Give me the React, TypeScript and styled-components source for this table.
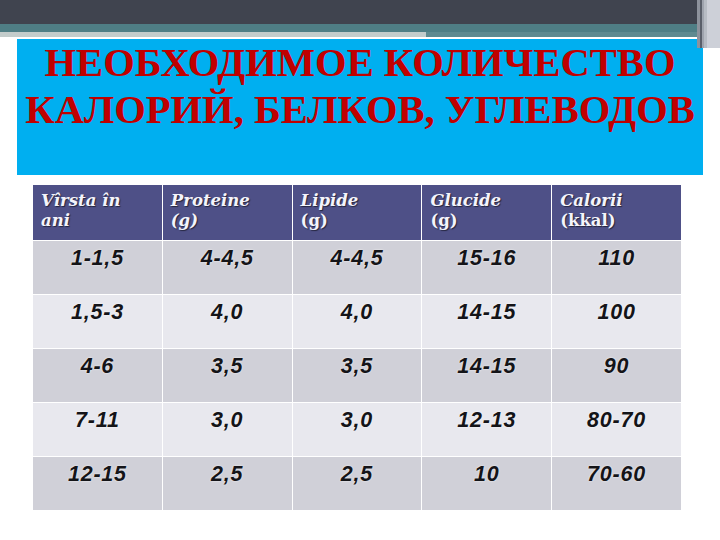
import React from "react";
import styled, { createGlobalStyle } from "styled-components";

const Global = createGlobalStyle`
  html, body { margin: 0; padding: 0; background: #ffffff; }
  body { width: 720px; height: 540px; overflow: hidden; }
`;

const Page = styled.div`
  width: 720px;
  height: 540px;
  background: #ffffff;
  display: flex;
  flex-direction: column;
`;

const TopBar = styled.div`
  display: flex;
  height: 37px;
`;

const BarMain = styled.div`
  flex: 1;
  display: flex;
  flex-direction: column;
`;

const Dark = styled.div`
  height: 24px;
  background: #40444f;
`;

const Teal = styled.div`
  height: 8px;
  background: #4f7e85;
`;

const StripRow = styled.div`
  height: 5px;
  display: flex;
`;

const StripLight = styled.div`
  width: 426px;
  background: #c3cccb;
`;

const StripTeal = styled.div`
  flex: 1;
  background: #5f8a90;
`;

const EdgeLines = styled.div`
  width: 23px;
  display: flex;
  height: 48px;
  position: relative;
  z-index: 1;
`;

const EdgeLine = styled.div<{ $w: number; $c: string }>`
  width: ${(p) => p.$w}px;
  background: ${(p) => p.$c};
`;

const TitleBox = styled.div`
  margin: 2px 0 0 17px;
  width: 686px;
  height: 136px;
  background: #00aff0;
  box-sizing: border-box;
  text-align: center;
  font-family: "Liberation Serif", "Times New Roman", serif;
  font-weight: bold;
  font-size: 40.6px;
  line-height: 47px;
  color: #c00000;
`;

const Wrap = styled.div`
  display: flex;
  flex-direction: column;
`;

const Table = styled.div`
  margin: 10px 0 0 33px;
  width: 648px;
  display: grid;
  grid-template-columns: repeat(5, 1fr);
  grid-template-rows: 55px repeat(5, 53px);
  gap: 1px;
  background: #ffffff;
`;

const HeadCell = styled.div`
  background: #4e5087;
  padding: 6px 4px 0 8px;
  font-family: "DejaVu Serif", Georgia, serif;
  font-weight: bold;
  font-size: 16.5px;
  line-height: 20px;
  color: #f4f4fb;
  text-shadow: 1px 1px 1px rgba(0, 0, 0, 0.55);
`;

const HeadPart = styled.span<{ $italic?: boolean }>`
  display: block;
  font-style: ${(p) => (p.$italic ? "italic" : "normal")};
  white-space: nowrap;
`;

const Cell = styled.div<{ $dark: boolean }>`
  background: ${(p) => (p.$dark ? "#d0d0d8" : "#e8e8ee")};
  padding-top: 5px;
  text-align: center;
  font-family: "Liberation Sans", Arial, sans-serif;
  font-weight: bold;
  font-style: italic;
  font-size: 21.5px;
  letter-spacing: 0.8px;
  line-height: 24px;
  color: #141418;
  text-shadow: 0 0 2px rgba(255, 255, 255, 0.9);
`;

const headers: { a: string; b: string; bItalic: boolean }[] = [
  { a: "Vîrsta în", b: "ani", bItalic: true },
  { a: "Proteine", b: "(g)", bItalic: true },
  { a: "Lipide", b: "(g)", bItalic: false },
  { a: "Glucide", b: "(g)", bItalic: false },
  { a: "Calorii", b: "(kkal)", bItalic: false },
];

const rows: string[][] = [
  ["1-1,5", "4-4,5", "4-4,5", "15-16", "110"],
  ["1,5-3", "4,0", "4,0", "14-15", "100"],
  ["4-6", "3,5", "3,5", "14-15", "90"],
  ["7-11", "3,0", "3,0", "12-13", "80-70"],
  ["12-15", "2,5", "2,5", "10", "70-60"],
];

export default function App() {
  return (
    <>
      <Global />
      <Page>
        <TopBar>
          <BarMain>
            <Dark />
            <Teal />
            <StripRow>
              <StripLight />
              <StripTeal />
            </StripRow>
          </BarMain>
          <EdgeLines>
            <EdgeLine $w={3} $c="#8d929c" />
            <EdgeLine $w={2} $c="#5a5f6a" />
            <EdgeLine $w={2} $c="#9ea3ad" />
            <EdgeLine $w={3} $c="#b7bcc4" />
            <EdgeLine $w={13} $c="#cdd0d8" />
          </EdgeLines>
        </TopBar>
        <Wrap>
          <TitleBox>
            НЕОБХОДИМОЕ КОЛИЧЕСТВО
            <br />
            КАЛОРИЙ, БЕЛКОВ, УГЛЕВОДОВ
          </TitleBox>
          <Table>
            {headers.map((h) => (
              <HeadCell key={h.a}>
                <HeadPart $italic>{h.a}</HeadPart>
                <HeadPart $italic={h.bItalic}>{h.b}</HeadPart>
              </HeadCell>
            ))}
            {rows.map((r, i) =>
              r.map((v, j) => (
                <Cell key={`${i}-${j}`} $dark={i % 2 === 0}>
                  {v}
                </Cell>
              ))
            )}
          </Table>
        </Wrap>
      </Page>
    </>
  );
}
